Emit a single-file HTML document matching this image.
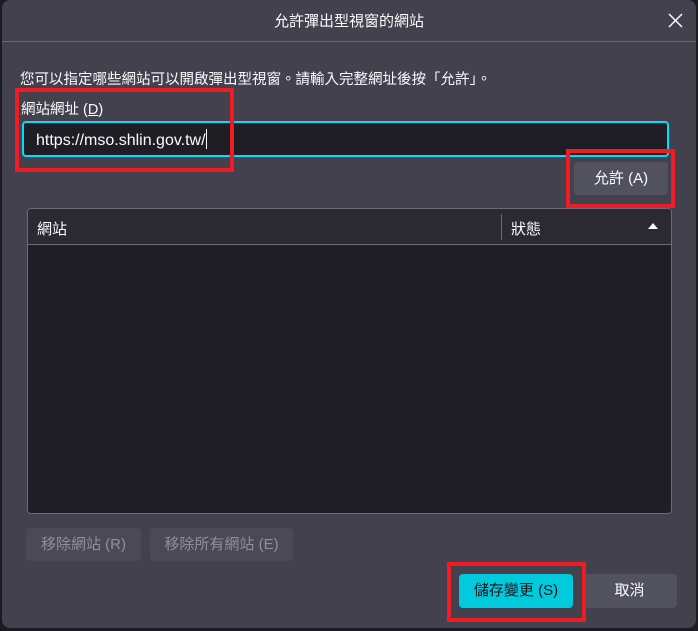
<!DOCTYPE html>
<html><head><meta charset="utf-8"><style>
body{margin:0;width:698px;height:631px;background:#1c1b22;position:relative;overflow:hidden;font-family:"Liberation Sans","Noto Sans CJK TC",sans-serif;color:#fbfbfe;font-size:15px}
.dlg{position:absolute;left:2px;top:0;width:694px;height:628px;background:#42414d;border-radius:8px}
.a{position:absolute}
.btn{position:absolute;border-radius:4px;background:#52515e;text-align:center;font-size:15px}
.red{position:absolute;border:4px solid #ee1c25;box-sizing:border-box}
</style></head><body>
<div class="dlg"></div>
<div class="a" style="left:0;top:10px;width:698px;text-align:center;font-size:15px">允許彈出型視窗的網站</div>
<svg class="a" style="left:668px;top:13px" width="15" height="15" viewBox="0 0 15 15"><path d="M1 1L14 14M14 1L1 14" stroke="#fbfbfe" stroke-width="1.5"/></svg>
<div class="a" style="left:2px;top:41px;width:694px;height:1px;background:#6b6a75"></div>
<div class="a" style="left:20px;top:68px;font-size:14.5px">您可以指定哪些網站可以開啟彈出型視窗。請輸入完整網址後按「允許」。</div>
<div class="a" style="left:21px;top:98px;font-size:14.5px">網站網址 (<u>D</u>)</div>
<div class="a" style="left:22px;top:121px;width:647px;height:36px;box-sizing:border-box;border:2px solid #00ddff;border-radius:4px;background:#1f1e25"></div>
<div class="a" style="left:36px;top:129px;font-size:16px">https://mso.shlin.gov.tw/<span style="display:inline-block;width:1px;height:20px;background:#fff;vertical-align:-4px"></span></div>
<div class="btn" style="left:574px;top:162px;width:94px;height:33px;line-height:33px">允許 (A)</div>
<div class="a" style="left:27px;top:208px;width:645px;height:306px;box-sizing:border-box;border:1px solid #6b6a75;border-radius:4px;background:#1f1e25;overflow:hidden">
<div style="height:35px;background:#2b2a33;border-bottom:1px solid #6b6a75;position:relative">
<span class="a" style="left:9px;top:9px">網站</span>
<span class="a" style="left:473px;top:5px;width:1px;height:26px;background:#6b6a75"></span>
<span class="a" style="left:483px;top:9px">狀態</span>
<svg class="a" style="left:620px;top:14px" width="10" height="6"><path d="M0 6L5 0L10 6Z" fill="#fbfbfe"/></svg></div></div>
<div class="btn" style="left:26px;top:528px;width:115px;height:33px;line-height:33px;background:#4a4955;color:#8f8f9d">移除網站 (R)</div>
<div class="btn" style="left:150px;top:528px;width:143px;height:33px;line-height:33px;background:#4a4955;color:#8f8f9d">移除所有網站 (E)</div>
<div class="btn" style="left:459px;top:574px;width:114px;height:34px;line-height:34px;background:#00cadb;color:#15141a">儲存變更 (S)</div>
<div class="btn" style="left:582px;top:574px;width:95px;height:34px;line-height:34px">取消</div>
<div class="red" style="left:15px;top:88px;width:219px;height:84px"></div>
<div class="red" style="left:566px;top:149px;width:109px;height:59px"></div>
<div class="red" style="left:447px;top:562px;width:139px;height:60px"></div>
</body></html>
